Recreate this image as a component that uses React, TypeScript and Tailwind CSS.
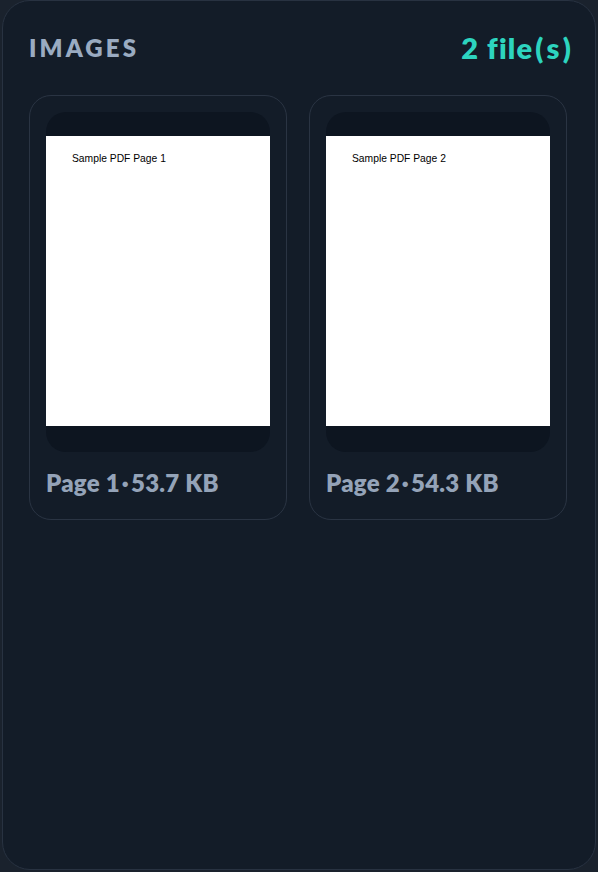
import React from 'react';

const pages = [
  { id: 1, label: 'Sample PDF Page 1', size: '53.7 KB' },
  { id: 2, label: 'Sample PDF Page 2', size: '54.3 KB' },
];

const App: React.FC = () => {
  return (
    <div className="min-h-[872px] w-[598px] bg-[#1a222d] overflow-hidden" style={{ fontFamily: 'Lato, "Noto Sans", sans-serif' }}>
      <div className="ml-[2px] h-[870px] w-[594px] rounded-[28px] border border-[#283241] bg-[#131c28] pt-[27px]">
        {/* Header */}
        <div className="flex items-center justify-between pl-[26px] pr-[23px]">
          <h2 className="text-[24px] font-extrabold uppercase tracking-[0.13em] text-[#9aabc1] leading-[40px]">Images</h2>
          <span className="text-[29px] font-extrabold tracking-[0.04em] text-[#2dd4bf] leading-[40px]">
            2 file<span className="mx-[2px]">(</span>s<span className="ml-[2px]">)</span>
          </span>
        </div>

        {/* Page cards */}
        <div className="ml-[26px] mt-[27px] grid w-[538px] grid-cols-2 gap-[22px]">
          {pages.map((page) => (
            <div key={page.id} className="rounded-[22px] border border-[#2a3443] px-4 pt-4 pb-[21px]">
              <div className="h-[340px] rounded-[20px] bg-[#0d1520] pt-[24px]">
                <div className="h-[290px] w-[224px] bg-white pt-[17px] pl-[26px]">
                  <p className="text-[10.3px] leading-[12px] text-black" style={{ fontFamily: '"Liberation Sans", Arial, sans-serif' }}>
                    {page.label}
                  </p>
                </div>
              </div>
              <p className="mt-[16px] text-[24px] font-extrabold tracking-[0.01em] leading-[30px] text-[#94a3b8]">
                Page {page.id}<span className="mx-[2px]">·</span>{page.size}
              </p>
            </div>
          ))}
        </div>
      </div>
    </div>
  );
};

export default App;
